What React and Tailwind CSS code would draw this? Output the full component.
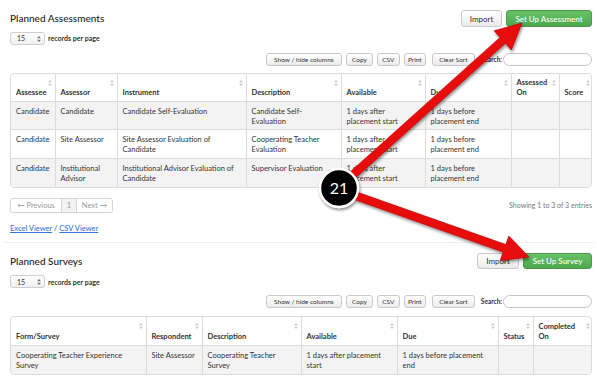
import React from "react";

const assessmentCols = [
  { label: "Assessee", w: 44 },
  { label: "Assessor", w: 62 },
  { label: "Instrument", w: 129 },
  { label: "Description", w: 95 },
  { label: "Available", w: 84 },
  { label: "Due", w: 86 },
  { label: "Assessed On", w: 48 },
  { label: "Score", w: 34 },
];

const assessmentRows = [
  ["Candidate", "Candidate", "Candidate Self-Evaluation", "Candidate Self-Evaluation", "1 days after placement start", "1 days before placement end", "", ""],
  ["Candidate", "Site Assessor", "Site Assessor Evaluation of Candidate", "Cooperating Teacher Evaluation", "1 days after placement start", "1 days before placement end", "", ""],
  ["Candidate", "Institutional Advisor", "Institutional Advisor Evaluation of Candidate", "Supervisor Evaluation", "1 days after placement start", "1 days before placement end", "", ""],
];

const surveyCols = [
  { label: "Form/Survey", w: 135 },
  { label: "Respondent", w: 56, nowrap: true },
  { label: "Description", w: 99 },
  { label: "Available", w: 96 },
  { label: "Due", w: 101 },
  { label: "Status", w: 35 },
  { label: "Completed On", w: 60 },
];

const surveyRows = [
  ["Cooperating Teacher Experience Survey", "Site Assessor", "Cooperating Teacher Survey", "1 days after placement start", "1 days before placement end", "", ""],
];

function SortIcon() {
  return (
    <svg width="4" height="6" viewBox="0 0 4 6" className="absolute right-[3px] top-[6px]">
      <path d="M2 0 L4 2.3 L0 2.3 Z M2 6 L4 3.7 L0 3.7 Z" fill="#c8c8c8" />
    </svg>
  );
}

function PageButton({ children, className = "" }) {
  return (
    <button
      className={`rounded-[3px] border border-[#c9c9c9] bg-gradient-to-b from-white to-[#ebebeb] text-[#333] ${className}`}
    >
      {children}
    </button>
  );
}

function SectionHeader({ title, action, importW, actionW, h }) {
  return (
    <div className={`flex items-center justify-between ${h}`}>
      <h2 className="text-[10px] font-medium text-[#222]">{title}</h2>
      <div className="flex h-full gap-[4px]">
        <PageButton className={`${importW} text-[8px]`}>Import</PageButton>
        <button
          className={`${actionW} rounded-[3px] border border-[#4a9a4a] bg-gradient-to-b from-[#67c267] to-[#4fa84f] text-[8px] font-medium text-white`}
        >
          {action}
        </button>
      </div>
    </div>
  );
}

function RecordsPerPage() {
  return (
    <div className="flex items-center gap-[3px]">
      <div className="flex h-[13px] w-[35px] items-center justify-between rounded-[3px] border border-[#cfcfcf] bg-gradient-to-b from-white to-[#f0f0f0] pl-[6px] pr-[3px] text-[7px] text-[#333]">
        <span>15</span>
        <svg width="4" height="6" viewBox="0 0 4 6">
          <path d="M2 0 L4 2.3 L0 2.3 Z M2 6 L4 3.7 L0 3.7 Z" fill="#777" />
        </svg>
      </div>
      <span className="text-[7px] font-bold text-[#333]">records per page</span>
    </div>
  );
}

function Toolbar() {
  return (
    <div className="flex h-[13px] items-stretch justify-end text-[6.5px]">
      <PageButton className="w-[76px]">Show / hide columns</PageButton>
      <PageButton className="ml-[4px] w-[27px]">Copy</PageButton>
      <PageButton className="ml-[4px] w-[23px]">CSV</PageButton>
      <PageButton className="ml-[4px] w-[22px]">Print</PageButton>
      <PageButton className="ml-[6px] w-[43px]">Clear Sort</PageButton>
      <span className="ml-[6px] self-center font-bold text-[#333]">Search:</span>
      <div className="ml-[1px] w-[89px] rounded-full border border-[#c4c4c4] bg-white" />
    </div>
  );
}

function DataTable({ cols, rows, headH, rowHs }) {
  return (
    <div className="overflow-hidden rounded-[4px] border border-[#dcdcdc]">
      <table className="w-full table-fixed border-collapse text-[7.5px] leading-[10px] text-[#333]">
        <colgroup>
          {cols.map((c) => (
            <col key={c.label} style={{ width: c.w }} />
          ))}
        </colgroup>
        <thead>
          <tr className={headH}>
            {cols.map((c, i) => (
              <th
                key={c.label}
                className={`relative border-b border-[#dcdcdc] pl-[5px] pr-[8px] pb-[3px] text-left align-bottom font-bold ${i > 0 ? "border-l" : ""}`}
              >
                {c.label}
                <SortIcon />
              </th>
            ))}
          </tr>
        </thead>
        <tbody>
          {rows.map((r, ri) => (
            <tr key={ri} className={`${rowHs[ri]} ${ri % 2 === 0 ? "bg-[#f3f3f3]" : "bg-white"}`}>
              {r.map((cell, ci) => (
                <td
                  key={ci}
                  className={`pl-[5px] pr-[8px] pt-[5px] align-top ${cols[ci].nowrap ? "whitespace-nowrap" : ""} ${ci > 0 ? "border-l border-[#dcdcdc]" : ""} ${ri > 0 ? "border-t border-[#dcdcdc]" : ""}`}
                >
                  {cell}
                </td>
              ))}
            </tr>
          ))}
        </tbody>
      </table>
    </div>
  );
}

function arrowPoints(x1, y1, x2, y2, w, hl, hw) {
  const dx = x2 - x1;
  const dy = y2 - y1;
  const len = Math.hypot(dx, dy);
  const ux = dx / len;
  const uy = dy / len;
  const nx = -uy;
  const ny = ux;
  const bx = x2 - ux * hl;
  const by = y2 - uy * hl;
  const pts = [
    [x1 + (nx * w) / 2, y1 + (ny * w) / 2],
    [bx + (nx * w) / 2, by + (ny * w) / 2],
    [bx + (nx * hw) / 2, by + (ny * hw) / 2],
    [x2, y2],
    [bx - (nx * hw) / 2, by - (ny * hw) / 2],
    [bx - (nx * w) / 2, by - (ny * w) / 2],
    [x1 - (nx * w) / 2, y1 - (ny * w) / 2],
  ];
  return pts.map((p) => p.join(",")).join(" ");
}

function Annotation() {
  return (
    <svg className="pointer-events-none absolute left-0 top-0" width="597" height="377">
      <defs>
        <filter id="shadow" x="-20%" y="-20%" width="140%" height="140%">
          <feDropShadow dx="1" dy="2" stdDeviation="1.5" floodColor="#000" floodOpacity="0.45" />
        </filter>
      </defs>
      <g filter="url(#shadow)">
        <polygon points={arrowPoints(345, 182, 522, 23, 8, 26, 26)} fill="#e80a0a" stroke="#b80000" strokeWidth="0.6" />
        <polygon points={arrowPoints(345, 192, 529, 257, 8, 26, 26)} fill="#e80a0a" stroke="#b80000" strokeWidth="0.6" />
        <circle cx="339" cy="188" r="19" fill="#000" stroke="#fff" strokeWidth="2.5" />
      </g>
      <text x="339" y="194" textAnchor="middle" fill="#fff" fontSize="16" fontFamily="Lato, 'Liberation Sans', sans-serif">
        21
      </text>
    </svg>
  );
}

export default function App() {
  return (
    <div className="relative h-[377px] w-[597px] overflow-hidden bg-white font-['Lato','Liberation_Sans',sans-serif]">
      <div className="pl-[10px] pr-[5px] pt-[10px]">
        {/* Planned Assessments */}
        <SectionHeader
          title="Planned Assessments"
          action="Set Up Assessment"
          importW="w-[41px]"
          actionW="w-[86px]"
          h="h-[17px]"
        />
        <div className="mt-[5px]">
          <RecordsPerPage />
        </div>
        <div className="mt-[8px]">
          <Toolbar />
        </div>
        <div className="mt-[7px]">
          <DataTable
            cols={assessmentCols}
            rows={assessmentRows}
            headH="h-[27px]"
            rowHs={["h-[28px]", "h-[29px]", "h-[29px]"]}
          />
        </div>
        <div className="mt-[10px] flex items-center justify-between">
          <div className="flex h-[15px] overflow-hidden rounded-[3px] border border-[#d6d6d6] text-[7.5px] text-[#999]">
            <span className="flex w-[50px] items-center justify-center">← Previous</span>
            <span className="flex w-[16px] items-center justify-center border-x border-[#d6d6d6] bg-[#f3f3f3]">1</span>
            <span className="flex w-[35px] items-center justify-center">Next →</span>
          </div>
          <span className="text-[7px] text-[#777]">Showing 1 to 3 of 3 entries</span>
        </div>
        <div className="mt-[10px] text-[7.5px] font-medium text-[#555]">
          <a className="text-[#2f7ad8] underline">Excel Viewer</a> /{" "}
          <a className="text-[#2f7ad8] underline">CSV Viewer</a>
        </div>
      </div>

      <div className="mx-[3px] mt-[8px] border-t border-[#eeeeee]" />

      <div className="pl-[10px] pr-[5px] pt-[10px]">
        {/* Planned Surveys */}
        <SectionHeader
          title="Planned Surveys"
          action="Set Up Survey"
          importW="w-[42px]"
          actionW="w-[69px]"
          h="h-[16px]"
        />
        <div className="mt-[6px]">
          <RecordsPerPage />
        </div>
        <div className="mt-[7px]">
          <Toolbar />
        </div>
        <div className="mt-[8px]">
          <DataTable
            cols={surveyCols}
            rows={surveyRows}
            headH="h-[28px]"
            rowHs={["h-[29px]"]}
          />
        </div>
      </div>

      <Annotation />
    </div>
  );
}
